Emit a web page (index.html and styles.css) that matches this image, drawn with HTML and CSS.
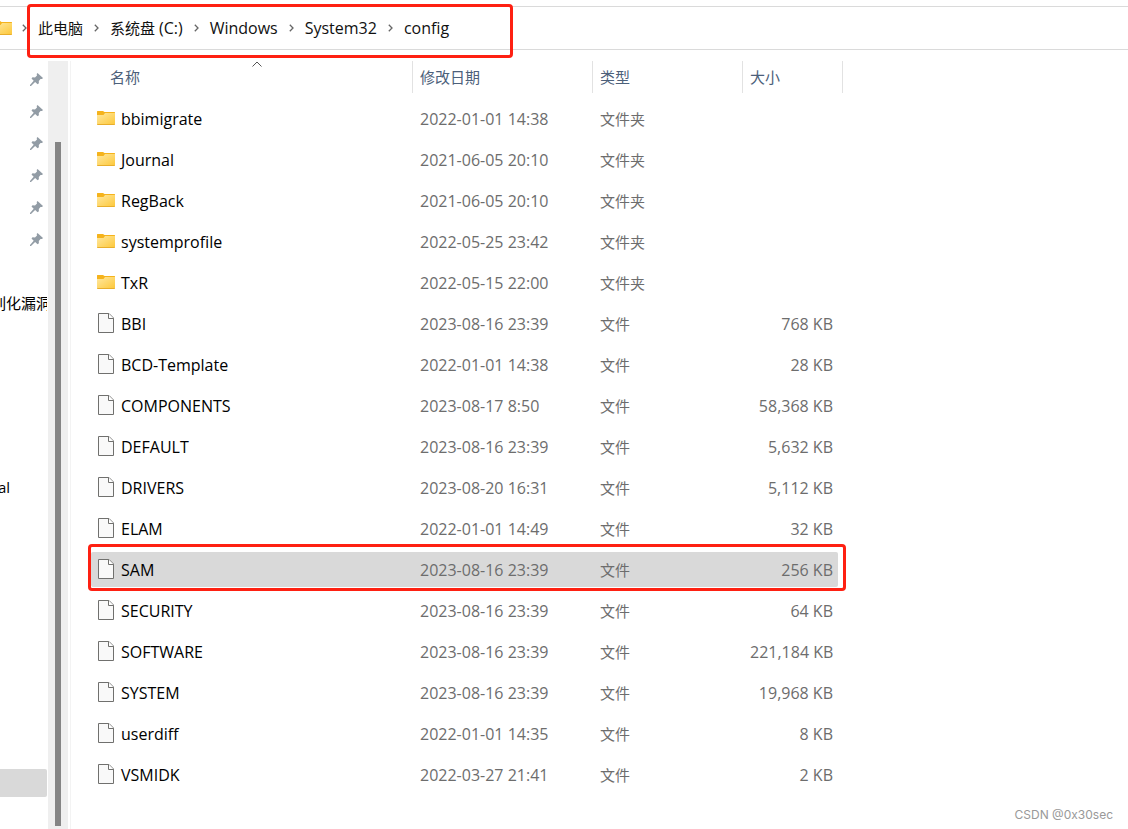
FILE: index.html
```
<!DOCTYPE html>
<html lang="zh-CN">
<head>
<meta charset="utf-8">
<title>config</title>
<link rel="stylesheet" href="styles.css">
</head>
<body>
<svg class="defs" aria-hidden="true">
  <defs>
    <linearGradient id="gold" x1="0" y1="0" x2="1" y2="1"><stop offset="0" stop-color="#ffe8a0"/><stop offset="1" stop-color="#fdc83a"/></linearGradient>
    <symbol id="folder" viewBox="0 0 18 14"><path d="M0 .5q0-.5.500-.5h5.500l1.500 1h10q.5 0 .5.500v2.500H0z" fill="#f5b31c"/><path d="M0 4h6.500l1.500-2H18V13q0 .5-1 .5H1q-1 0-1-.5z" fill="url(#gold)"/><path d="M0 13h18v.3q0 .7-1 .7H1q-1 0-1-.7z" fill="#e8ae2c"/></symbol>
    <symbol id="file" viewBox="0 0 16 20"><path d="M.5.5h10.500l4.500 4.500v14.500H.5z" fill="#f9f9f9" stroke="#70706e"/><path d="M10.500.5V5.500h5" fill="#fff" stroke="#70706e"/></symbol>
    <symbol id="pin" viewBox="0 0 13 13"><path d="M7.500 0 13 5l-1 1-1.500.1-1.700 2 .1 2.100-1.300 1.100-2.500-2.400L1 13H0v-1l3.700-4.200L1.500 5.500l1-1.200 2.500.1 2-2-.3-1.500z" fill="#929ca5"/></symbol>
    <symbol id="chevron" viewBox="0 0 5 8"><path d="m.8.8 3.200 3.200-3.200 3.200" fill="none" stroke="#666" stroke-width="1.300"/></symbol>
  </defs>
</svg>
<header class="address">
  <svg class="address-folder"><use href="#folder"/></svg>
  <svg class="chevron"><use href="#chevron"/></svg>
  <nav class="crumbs" aria-label="路径">
    <a href="#">此电脑</a><svg class="chevron"><use href="#chevron"/></svg>
    <a href="#">系统盘 <span class="latin">(C:)</span></a><svg class="chevron"><use href="#chevron"/></svg>
    <a class="latin" href="#">Windows</a><svg class="chevron"><use href="#chevron"/></svg>
    <a class="latin" href="#">System32</a><svg class="chevron"><use href="#chevron"/></svg>
    <a class="latin" href="#">config</a>
  </nav>
</header>
<div class="explorer">
  <aside class="sidebar">
    <div class="side-item"><svg class="pin"><use href="#pin"/></svg></div>
    <div class="side-item"><svg class="pin"><use href="#pin"/></svg></div>
    <div class="side-item"><svg class="pin"><use href="#pin"/></svg></div>
    <div class="side-item"><svg class="pin"><use href="#pin"/></svg></div>
    <div class="side-item"><svg class="pin"><use href="#pin"/></svg></div>
    <div class="side-item"><svg class="pin"><use href="#pin"/></svg></div>
    <div class="side-item"></div>
    <div class="side-item side-cut">列化漏洞</div>
    <div class="side-item side-tail">al</div>
    <div class="side-current"></div>
  </aside>
  <div class="scrollbar"><div class="thumb"></div></div>
  <main class="files">
    <table>
      <colgroup><col class="col-name"><col class="col-date"><col class="col-type"><col class="col-size"></colgroup>
      <thead><tr>
        <th scope="col"><div class="head head-name">名称<svg class="sort" viewBox="0 0 10 6"><path d="M.5 5.500 5 1l4.500 4.500" fill="none" stroke="#555"/></svg></div></th>
        <th scope="col"><div class="head">修改日期</div></th>
        <th scope="col"><div class="head">类型</div></th>
        <th scope="col"><div class="head">大小</div></th>
      </tr></thead>
      <tbody>
        <tr><td><div class="name"><svg class="folder"><use href="#folder"/></svg>bbimigrate</div></td><td class="date">2022-01-01 14:38</td><td>文件夹</td><td></td></tr>
        <tr><td><div class="name"><svg class="folder"><use href="#folder"/></svg>Journal</div></td><td class="date">2021-06-05 20:10</td><td>文件夹</td><td></td></tr>
        <tr><td><div class="name"><svg class="folder"><use href="#folder"/></svg>RegBack</div></td><td class="date">2021-06-05 20:10</td><td>文件夹</td><td></td></tr>
        <tr><td><div class="name"><svg class="folder"><use href="#folder"/></svg>systemprofile</div></td><td class="date">2022-05-25 23:42</td><td>文件夹</td><td></td></tr>
        <tr><td><div class="name"><svg class="folder"><use href="#folder"/></svg>TxR</div></td><td class="date">2022-05-15 22:00</td><td>文件夹</td><td></td></tr>
        <tr><td><div class="name"><svg class="file"><use href="#file"/></svg>BBI</div></td><td class="date">2023-08-16 23:39</td><td>文件</td><td class="size">768 KB</td></tr>
        <tr><td><div class="name"><svg class="file"><use href="#file"/></svg>BCD-Template</div></td><td class="date">2022-01-01 14:38</td><td>文件</td><td class="size">28 KB</td></tr>
        <tr><td><div class="name"><svg class="file"><use href="#file"/></svg>COMPONENTS</div></td><td class="date">2023-08-17 8:50</td><td>文件</td><td class="size">58,368 KB</td></tr>
        <tr><td><div class="name"><svg class="file"><use href="#file"/></svg>DEFAULT</div></td><td class="date">2023-08-16 23:39</td><td>文件</td><td class="size">5,632 KB</td></tr>
        <tr><td><div class="name"><svg class="file"><use href="#file"/></svg>DRIVERS</div></td><td class="date">2023-08-20 16:31</td><td>文件</td><td class="size">5,112 KB</td></tr>
        <tr><td><div class="name"><svg class="file"><use href="#file"/></svg>ELAM</div></td><td class="date">2022-01-01 14:49</td><td>文件</td><td class="size">32 KB</td></tr>
        <tr class="selected"><td><div class="name"><svg class="file"><use href="#file"/></svg>SAM</div></td><td class="date">2023-08-16 23:39</td><td>文件</td><td class="size">256 KB</td></tr>
        <tr><td><div class="name"><svg class="file"><use href="#file"/></svg>SECURITY</div></td><td class="date">2023-08-16 23:39</td><td>文件</td><td class="size">64 KB</td></tr>
        <tr><td><div class="name"><svg class="file"><use href="#file"/></svg>SOFTWARE</div></td><td class="date">2023-08-16 23:39</td><td>文件</td><td class="size">221,184 KB</td></tr>
        <tr><td><div class="name"><svg class="file"><use href="#file"/></svg>SYSTEM</div></td><td class="date">2023-08-16 23:39</td><td>文件</td><td class="size">19,968 KB</td></tr>
        <tr><td><div class="name"><svg class="file"><use href="#file"/></svg>userdiff</div></td><td class="date">2022-01-01 14:35</td><td>文件</td><td class="size">8 KB</td></tr>
        <tr><td><div class="name"><svg class="file"><use href="#file"/></svg>VSMIDK</div></td><td class="date">2022-03-27 21:41</td><td>文件</td><td class="size">2 KB</td></tr>
      </tbody>
    </table>
  </main>
</div>
<div class="watermark">CSDN @0x30sec</div>
</body>
</html>
```

FILE: styles.css
```
* { box-sizing: border-box; }
body {
  margin: 0;
  min-height: 100vh;
  display: flex;
  flex-direction: column;
  background: #fff;
  color: #000;
  font: 15px/20px "Open Sans", "Noto Sans CJK SC", sans-serif;
}
svg { display: block; flex: none; }
.defs { position: absolute; width: 0; height: 0; }

.address {
  display: flex;
  align-items: center;
  height: 44px;
  margin-top: 6px;
  border-top: 1px solid #dadada;
  border-bottom: 1px solid #dadada;
}
.address-folder { width: 18px; height: 14px; margin: 0 10px 0 -6px; }
.chevron { width: 5px; height: 8px; }
.crumbs {
  position: relative;
  align-self: stretch;
  display: flex;
  align-items: center;
  gap: 11px;
  padding: 0 64px 0 11px;
}
.crumbs::after {
  content: "";
  position: absolute;
  inset: -3px 0 -9px 0;
  border: 3px solid #fe2012;
  border-radius: 4px;
  pointer-events: none;
}
.crumbs a { padding-bottom: 1px; color: #111; text-decoration: none; white-space: nowrap; }
.crumbs .latin { font-size: 16px; }

.explorer { flex: 1; display: flex; padding-top: 11px; }
.sidebar { width: 47px; margin-right: 1px; padding-top: 2px; overflow: hidden; }
.side-item { display: flex; align-items: center; height: 32px; white-space: nowrap; }
.pin { width: 13px; height: 13px; margin-left: 30px; }
.side-cut { margin-left: -9px; }
.side-tail { margin-top: 152px; margin-left: -2px; }
.side-current {
  height: 28px;
  margin-top: 266px;
  background: #d9d9d9;
  border-radius: 0 2px 2px 0;
}
.scrollbar { display: flex; justify-content: center; width: 20px; padding: 81px 0 3px; background: #efefef; }
.thumb { width: 6px; background: #858585; }

.files { flex: 1; margin-left: 2px; padding-left: 20px; border-left: 1px solid #f3f3f3; }
table { table-layout: fixed; width: 752px; border-collapse: collapse; }
.col-name { width: 322px; }
.col-date { width: 180px; }
.col-type { width: 150px; }
.col-size { width: 100px; }
th { height: 37px; padding: 0; vertical-align: top; text-align: left; font-weight: 400; color: #4c607a; }
.head { height: 32px; padding: 6px 7px; border-right: 1px solid #e2e2e2; }
.head-name { position: relative; padding-left: 19px; }
.sort { position: absolute; left: 161px; top: 0; width: 10px; height: 6px; }
td { height: 41px; padding: 0 7px; color: #6d6d6d; white-space: nowrap; }
.name { display: flex; align-items: center; color: #000; font-size: 16px; }
.folder { width: 18px; height: 14px; margin: 0 6px 2px -1px; }
.file { width: 16px; height: 20px; margin: 0 7px 2px 0; }
.date, .size { font-size: 16px; }
td.size { text-align: right; padding-right: 10px; }
.selected { position: relative; z-index: 0; }
.selected td:first-child::before {
  content: "";
  position: absolute;
  z-index: -1;
  inset: 3px 5px 3px 0;
  background: #d9d9d9;
  border-radius: 2px;
}
.selected td:first-child::after {
  content: "";
  position: absolute;
  inset: -5px -3px -1px -3px;
  border: 3px solid #fe2012;
  border-radius: 4px;
}
.watermark {
  position: absolute;
  right: 15px;
  bottom: 5px;
  color: #999;
  font: 12px/18px Inter, sans-serif;
}
```
